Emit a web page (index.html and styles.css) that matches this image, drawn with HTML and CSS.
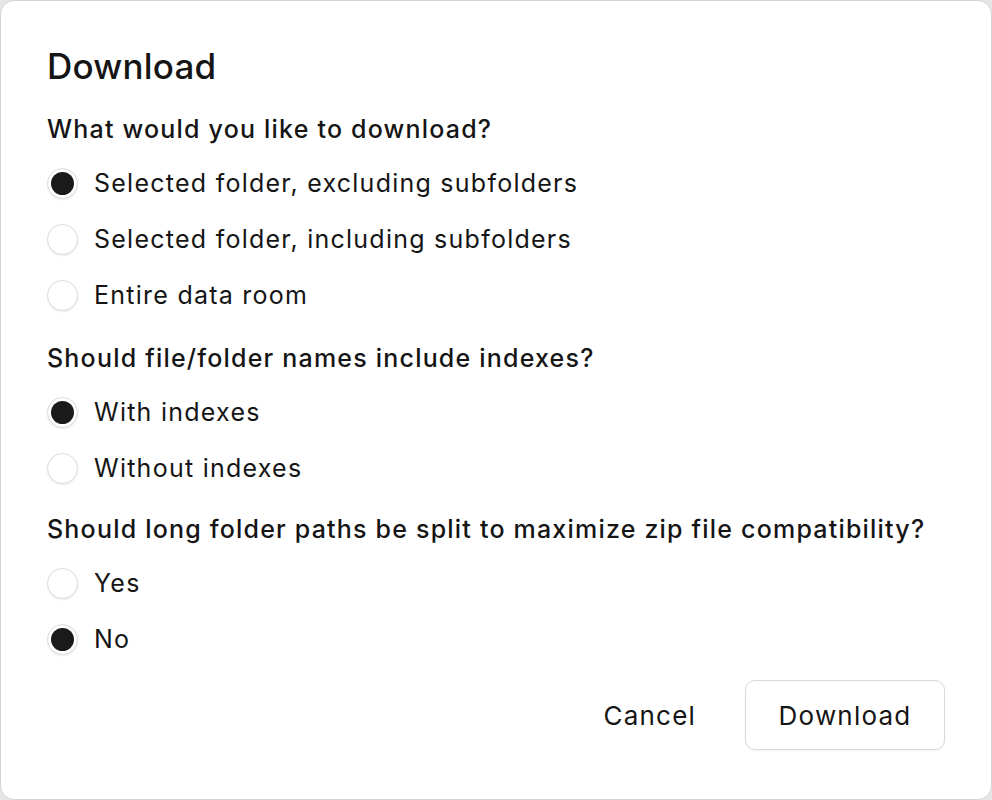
FILE: index.html
```html
<!DOCTYPE html>
<html>
<head>
<meta charset="utf-8">
<link rel="stylesheet" href="styles.css">
</head>
<body>
<div class="dialog">
  <h1 class="title">Download</h1>
  <div class="group">
    <div class="question">What would you like to download?</div>
    <label class="option"><span class="radio checked"></span><span class="label">Selected folder, excluding subfolders</span></label>
    <label class="option"><span class="radio"></span><span class="label">Selected folder, including subfolders</span></label>
    <label class="option"><span class="radio"></span><span class="label">Entire data room</span></label>
  </div>
  <div class="group">
    <div class="question">Should file/folder names include indexes?</div>
    <label class="option"><span class="radio checked"></span><span class="label">With indexes</span></label>
    <label class="option"><span class="radio"></span><span class="label">Without indexes</span></label>
  </div>
  <div class="group group-last">
    <div class="question">Should long folder paths be split to maximize zip file compatibility?</div>
    <label class="option"><span class="radio"></span><span class="label">Yes</span></label>
    <label class="option"><span class="radio checked"></span><span class="label">No</span></label>
  </div>
  <div class="actions">
    <button class="btn btn-text">Cancel</button>
    <button class="btn btn-outline">Download</button>
  </div>
</div>
</body>
</html>
```
FILE: styles.css
```css
* { box-sizing: border-box; }
html, body { margin: 0; padding: 0; background: #e6e6e6; }
body { font-family: Inter, "Noto Sans", sans-serif; color: #151515; }
.dialog {
  width: 992px;
  height: 800px;
  background: #fff;
  border: 1px solid #d4d4d4;
  border-radius: 14px;
  padding: 44px 46px 0 46px;
  display: flex;
  flex-direction: column;
}
.title {
  margin: 0;
  font-size: 35px;
  font-weight: 500;
  line-height: 42px;
  letter-spacing: 0.2px;
}
.group { display: flex; flex-direction: column; margin-top: 25px; }
.group + .group { margin-top: 18px; }
.group.group-last { margin-top: 16px; }
.question {
  font-size: 25px;
  font-weight: 500;
  line-height: 34px;
  letter-spacing: 1.2px;
}
.option {
  display: flex;
  align-items: center;
  height: 56px;
  font-size: 25px;
  line-height: 34px;
  letter-spacing: 1.25px;
}
.option:first-of-type { margin-top: 9px; }
.radio {
  width: 31px;
  height: 31px;
  border-radius: 50%;
  border: 1px solid #dcdcdc;
  box-shadow: 0 1px 2px rgba(0,0,0,0.08);
  background: #fff;
  margin-right: 16px;
  flex: none;
  display: flex;
  align-items: center;
  justify-content: center;
}
.radio.checked::after {
  content: "";
  width: 23px;
  height: 23px;
  border-radius: 50%;
  background: #1a1a1a;
}
.actions {
  display: flex;
  justify-content: flex-end;
  align-items: center;
  gap: 49px;
  margin-top: 13px;
}
.btn {
  font-family: inherit;
  font-size: 26px;
  letter-spacing: 1.2px;
  color: #151515;
  background: #fff;
  border: none;
  cursor: pointer;
}
.btn-text { padding: 0; }
.btn-outline {
  width: 200px;
  height: 70px;
  border: 1px solid #dadada;
  border-radius: 10px;
  box-shadow: 0 1px 2px rgba(0,0,0,0.06);
}
```
